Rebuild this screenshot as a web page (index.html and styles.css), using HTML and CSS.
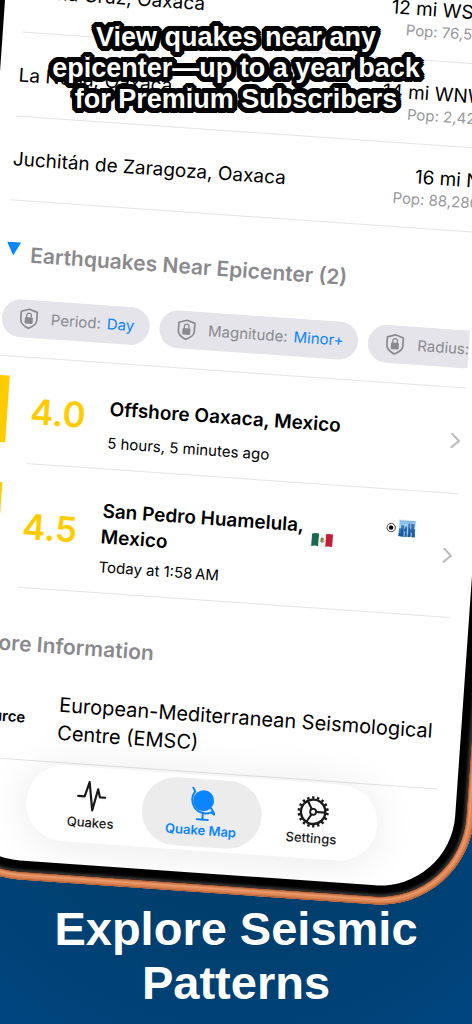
FILE: index.html
```html
<!DOCTYPE html>
<html lang="en">
<head>
<meta charset="utf-8">
<meta name="viewport" content="width=device-width, initial-scale=1">
<title>Explore Seismic Patterns</title>
<link rel="stylesheet" href="styles.css">
</head>
<body>
<svg class="defs" aria-hidden="true">
  <symbol id="lock-shield" viewBox="0 0 20 22">
    <path d="M10 1.4 18 4v8.2c0 3.6-3.4 6.4-8 8.4-4.6-2-8-4.8-8-8.4V4z" fill="none" stroke="currentColor" stroke-width="1.7" stroke-linejoin="round"/>
    <rect x="6" y="9.4" width="8" height="6.6" rx="1" fill="currentColor"/>
    <path d="M7.7 9.8V7.6a2.3 2.3 0 0 1 4.6 0v2.2" fill="none" stroke="currentColor" stroke-width="1.3"/>
  </symbol>
  <symbol id="chevron" viewBox="0 0 10 16">
    <path d="M1.5 1.5 8.5 8l-7 6.5" fill="none" stroke="currentColor" stroke-width="2.2" stroke-linecap="round" stroke-linejoin="round"/>
  </symbol>
</svg>
<main class="scene">
  <h2 class="headline">View quakes near any<br>epicenter—up to a year back<br>for Premium Subscribers</h2>

  <div class="phone">
    <div class="bezel">
      <div class="screen">
        <ul class="list">
          <li class="city"><span class="city-name">Salina Cruz, Oaxaca</span><span class="city-info"><span class="distance">12 mi WSW</span><span class="population">Pop: 76,596</span></span></li>
          <li class="city"><span class="city-name">La Noria, Oaxaca</span><span class="city-info"><span class="distance">14 mi WNW</span><span class="population">Pop: 2,420</span></span></li>
          <li class="city"><span class="city-name">Juchitán de Zaragoza, Oaxaca</span><span class="city-info"><span class="distance">16 mi N</span><span class="population">Pop: 88,280</span></span></li>
        </ul>

        <h3 class="section-title section-title-first">
          <svg class="disclosure" viewBox="0 0 14 14" aria-hidden="true"><path d="M.8.5h12.4a.5.5 0 0 1 .4.8L7.5 13a.6.6 0 0 1-1 0L.4 1.3A.5.5 0 0 1 .8.5z" fill="currentColor"/></svg>
          Earthquakes Near Epicenter (2)
        </h3>

        <div class="filters">
          <button class="filter" type="button"><svg class="filter-icon" aria-hidden="true"><use href="#lock-shield"/></svg><span>Period:</span><span class="filter-value">Day</span></button>
          <button class="filter" type="button"><svg class="filter-icon" aria-hidden="true"><use href="#lock-shield"/></svg><span>Magnitude:</span><span class="filter-value">Minor+</span></button>
          <button class="filter" type="button"><svg class="filter-icon" aria-hidden="true"><use href="#lock-shield"/></svg><span>Radius:</span></button>
        </div>

        <ul class="list">
          <li class="quake">
            <span class="quake-bar"></span>
            <a class="quake-link" href="#offshore-oaxaca">
              <span class="magnitude">4.0</span>
              <span class="quake-body">
                <span class="quake-heading"><span class="quake-name">Offshore Oaxaca, Mexico</span></span>
                <span class="quake-time">5 hours, 5 minutes ago</span>
              </span>
              <svg class="chevron" aria-hidden="true"><use href="#chevron"/></svg>
            </a>
          </li>
          <li class="quake">
            <span class="quake-bar"></span>
            <a class="quake-link" href="#san-pedro-huamelula">
              <span class="magnitude">4.5</span>
              <span class="quake-body">
                <span class="quake-heading">
                  <span class="quake-name quake-name-flagged">San Pedro Huamelula, Mexico</span>
                  <svg class="flag" viewBox="0 0 22 15" role="img" aria-label="Mexico">
                    <path d="M.5 1.4Q4 .2 7.6 1v12.6Q4 12.8.5 14z" fill="#1b6a4c"/>
                    <path d="M7.600 1q3.600.9 7 .2v12.600q-3.400.7-7-.2z" fill="#f3f3f1"/>
                    <path d="M14.600 1.200Q18 .3 21.500 1v12.600Q18 12.900 14.600 13.800z" fill="#c01f3a"/>
                    <path d="M9.500 5.500q1.600-1.500 3 0 .6 1.800-.8 3.300-1.600.6-2.200-.9z" fill="#9a7a45"/>
                    <path d="M9 8.500q2 2.200 4.200 0" fill="none" stroke="#5e8b5a" stroke-width=".8"/>
                  </svg>
                  <span class="badges">
                    <svg class="target" viewBox="0 0 10 10" aria-hidden="true"><circle cx="5" cy="5" r="4.200" fill="none" stroke="#111" stroke-width=".8"/><circle cx="5" cy="5" r="2.200" fill="#000"/></svg>
                    <svg class="skyline" viewBox="0 0 18 18" aria-hidden="true">
                      <defs><linearGradient id="sky" x1="0" y1="0" x2="0" y2="1"><stop offset="0" stop-color="#7db6e8"/><stop offset=".5" stop-color="#b5d8f0"/><stop offset="1" stop-color="#3c7fc0"/></linearGradient></defs>
                      <path d="M0 0h18v18H0z" fill="#eaf0f5"/>
                      <path d="M1 1h16v16H1z" fill="url(#sky)"/>
                      <path d="M1 9h2V6h3v3h1V7h2v10H1zM10 17V5l1-2 1 2v4h1V4h3v5h1v8z" fill="#3574b4"/>
                      <path d="M3 10h2v7H3zM7 9h1v8H7zM11 8h1v9h-1zM14 9h2v8h-2zM1 14h16v3H1z" fill="#1d5a9c"/>
                      <path d="M6 12h1v5H6zM9 11h1v6H9zM13 13h1v4h-1z" fill="#a8d3ee"/>
                    </svg>
                  </span>
                </span>
                <span class="quake-time">Today at 1:58&#8239;AM</span>
              </span>
              <svg class="chevron" aria-hidden="true"><use href="#chevron"/></svg>
            </a>
          </li>
        </ul>

        <h3 class="section-title">More Information</h3>
        <dl class="source">
          <dt>Source</dt>
          <dd>European-Mediterranean Seismological Centre (EMSC)</dd>
        </dl>

        <nav class="tabs">
          <button class="tab" type="button">
            <svg class="tab-icon" viewBox="0 0 34 34" aria-hidden="true"><path d="M3.500 17.500h6.500L14 3l4.500 28L23 9.500l2.300 8H30.500" fill="none" stroke="currentColor" stroke-width="2.200" stroke-linecap="round" stroke-linejoin="round"/></svg>
            <span>Quakes</span>
          </button>
          <button class="tab tab-active" type="button" aria-current="page">
            <svg class="tab-icon" viewBox="0 0 34 34" aria-hidden="true">
              <circle cx="18" cy="13.500" r="10.500" fill="currentColor"/>
              <path d="M6.800 1.200 9 4.700A13.600 13.600 0 0 0 26.400 24.600L29.400 26.800" fill="none" stroke="currentColor" stroke-width="2" stroke-linecap="round" stroke-linejoin="round"/>
              <path d="M26 20.500l3.400 5.300M18 27.500v4.500M12.500 32.500h11" fill="none" stroke="currentColor" stroke-width="2" stroke-linecap="round"/>
            </svg>
            <span>Quake Map</span>
          </button>
          <button class="tab" type="button">
            <svg class="tab-icon" viewBox="0 0 34 34" aria-hidden="true">
              <circle cx="17" cy="17" r="14.300" fill="none" stroke="currentColor" stroke-width="2.600" stroke-dasharray="2.390 2.600"/>
              <circle cx="17" cy="17" r="12.200" fill="none" stroke="currentColor" stroke-width="2.400"/>
              <circle cx="17" cy="17" r="3" fill="none" stroke="currentColor" stroke-width="1.900"/>
              <path d="M20 17h9M15.500 14.400 11 6.600M15.500 19.600 11 27.400" stroke="currentColor" stroke-width="2.100"/>
            </svg>
            <span>Settings</span>
          </button>
        </nav>
      </div>
    </div>
  </div>

  <h1 class="caption">Explore Seismic<br>Patterns</h1>
</main>
</body>
</html>
```
FILE: styles.css
```css
* {
  box-sizing: border-box;
}

body {
  margin: 0;
  font-family: Inter, "Noto Sans", sans-serif;
  color: #000;
}

.defs {
  display: none;
}

.scene {
  position: relative;
  display: flex;
  flex-direction: column;
  gap: 26px;
  min-height: 100vh;
  overflow: hidden;
  background: radial-gradient(ellipse 420px 420px at 50% 720px, #003c68 0, #003f6e 50%, #004784 100%);
}

.headline {
  position: absolute;
  z-index: 2;
  top: 22px;
  left: 0;
  right: 0;
  margin: 0;
  text-align: center;
  font: bold 27px/31px "Liberation Sans", Arial, sans-serif;
  color: #fff;
  text-shadow:
    5px 0 #000, 5px 2px #000, 4px 3px #000, 3px 4px #000,
    2px 5px #000, 0 5px #000, -2px 5px #000, -3px 4px #000,
    -4px 3px #000, -5px 2px #000, -5px 0 #000, -5px -2px #000,
    -4px -3px #000, -3px -4px #000, -2px -5px #000, 0 -5px #000,
    2px -5px #000, 3px -4px #000, 4px -3px #000, 5px -2px #000,
    2px 0 #000, 0 2px #000, -2px 0 #000, 0 -2px #000;
}

.phone {
  width: calc(100% + 72px);
  flex: none;
  margin: -53px 0 0 -14px;
  padding: 0 8px 8px;
  transform: rotate(4deg);
  transform-origin: 14px 53px;
  border-radius: 0 0 94px 94px;
  background: #c96a3b;
  box-shadow: inset 0 0 2px 1px #a9522b, inset 0 0 0 4px #e08a58, inset 0 0 3px 6px #f0a577;
}

.bezel {
  padding: 0 11px 11px;
  border-radius: 0 0 86px 86px;
  background: #000;
  box-shadow: inset 0 0 3px 2px #3c3c3e, 0 0 2px #5a2a14;
}

.screen {
  position: relative;
  padding: 0 19px 100px;
  border-radius: 0 0 75px 75px;
  background: #fff;
  overflow: hidden;
}

.list {
  margin: 0;
  padding: 0;
  list-style: none;
}

.city {
  display: flex;
  align-items: center;
  justify-content: space-between;
  padding: 21px 0 18px;
  border-bottom: 1px solid #e4e4e6;
  font-size: 19px;
  line-height: 24px;
}

.city-info {
  display: grid;
  justify-items: end;
}

.population {
  font-size: 15px;
  line-height: 20px;
  color: #98989d;
}

.section-title {
  display: flex;
  align-items: center;
  gap: 10px;
  margin: 0;
  padding: 42px 0 30px;
  font-size: 21px;
  font-weight: 600;
  line-height: 28px;
  color: #8a8a8e;
}

.section-title-first {
  padding-top: 40px;
}

.disclosure {
  width: 14px;
  height: 14px;
  margin-bottom: 12px;
  color: #0a84ff;
}

.filters {
  display: flex;
  gap: 10px;
  padding-bottom: 19px;
  border-bottom: 1px solid #e4e4e6;
  overflow: hidden;
}

.filter {
  display: flex;
  flex: none;
  align-items: center;
  gap: 6px;
  height: 38px;
  padding: 0 15px 0 17px;
  border: 0;
  border-radius: 19px;
  background: #e5e4ea;
  font: 400 15px/20px Inter, "Noto Sans", sans-serif;
  color: #8a8a8e;
}

.filter-icon {
  width: 20px;
  height: 22px;
  margin-right: 6px;
}

.filter-value {
  color: #0a84ff;
}

.quake {
  display: flex;
  gap: 23px;
}

.quake-bar {
  flex: none;
  width: 12px;
  margin: 19px 0 20px;
  background: #ffcc00;
}

.quake-link {
  display: flex;
  flex: 1;
  align-items: center;
  border-bottom: 1px solid #e4e4e6;
  color: inherit;
  text-decoration: none;
}

.magnitude {
  flex: none;
  width: 79px;
  font-size: 35px;
  font-weight: 600;
  color: #ffcc00;
}

.quake-body {
  display: grid;
  flex: 1;
  gap: 7px;
  padding: 29px 0 15px;
}

.quake-heading {
  display: flex;
  align-items: center;
  min-height: 34px;
}

.quake-name {
  font-size: 19px;
  font-weight: 600;
  line-height: 26px;
}

.quake-name-flagged {
  max-width: 66%;
}

.flag {
  flex: none;
  width: 22px;
  height: 15px;
  margin-left: 3px;
}

.badges {
  display: flex;
  align-items: center;
  align-self: flex-start;
  gap: 2px;
  margin-left: auto;
}

.target {
  width: 10px;
  height: 10px;
}

.skyline {
  width: 18px;
  height: 18px;
}

.quake-time {
  font-size: 15px;
  line-height: 20px;
}

.chevron {
  flex: none;
  width: 10px;
  height: 16px;
  margin: 0 2px 0 28px;
  color: #bfbfc2;
}

.source {
  display: flex;
  align-items: center;
  gap: 33px;
  margin: 0;
  padding-bottom: 15px;
  border-bottom: 1px solid #e4e4e6;
}

.source dt {
  font-size: 15px;
  font-weight: 600;
}

.source dd {
  flex: 1;
  margin: 0;
  font-size: 20px;
  line-height: 28px;
}

.tabs {
  position: absolute;
  bottom: 22px;
  left: 77px;
  right: 77px;
  display: grid;
  grid-template-columns: repeat(3, 1fr);
  padding: 4px 10px;
  border-radius: 39px;
  background: #fff;
  box-shadow: 0 2px 46px rgba(0, 0, 0, 0.09);
}

.tab {
  display: flex;
  flex-direction: column;
  align-items: center;
  padding: 8px 0;
  border: 0;
  border-radius: 35px;
  background: none;
  font: 500 13px/18px Inter, "Noto Sans", sans-serif;
  color: #1a1a1a;
}

.tab-active {
  margin: 0 -5px;
  background: #ececec;
  font-weight: 600;
  color: #0a84ff;
}

.tab-icon {
  width: 34px;
  height: 34px;
}

.caption {
  margin: 0;
  text-align: center;
  font: bold 47px/54px "Liberation Sans", Arial, sans-serif;
  color: #fff;
}
```
